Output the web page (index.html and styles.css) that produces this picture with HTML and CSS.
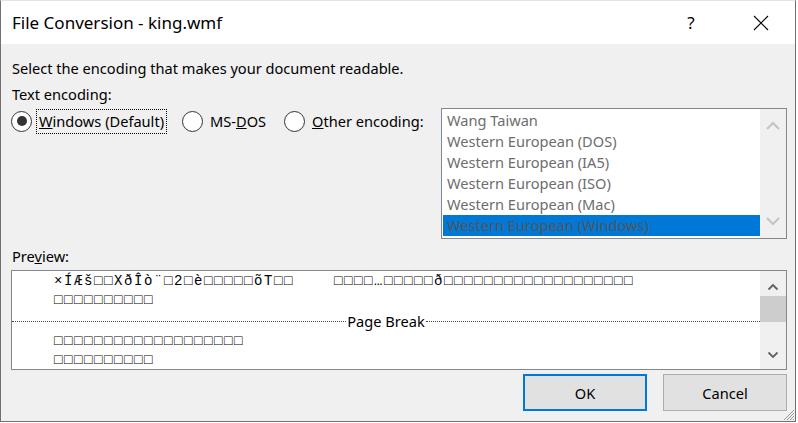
FILE: index.html
```html
<!DOCTYPE html>
<html lang="en">
<head>
  <meta charset="UTF-8">
  <title>File Conversion</title>
  <link rel="stylesheet" href="styles.css">
</head>
<body>

<div class="window">
  <!-- Title bar -->
  <div class="titlebar">
    <span class="title">File Conversion - king.wmf</span>
    <span class="help">?</span>
    <span class="close">
      <svg width="16" height="16" viewBox="0 0 16 16"><path d="M1 1 L15 15 M15 1 L1 15" stroke="#000" stroke-width="1.1" fill="none"/></svg>
    </span>
  </div>

  <div class="body">
    <p class="intro">Select the encoding that makes your document readable.</p>
    <p class="label">Text encoding:</p>

    <div class="enc-row">
      <div class="radios">
        <label class="radio checked"><span class="dot"></span><span class="text focus"><u>W</u>indows (Default)</span></label>
        <label class="radio"><span class="dot"></span><span class="text">MS-<u>D</u>OS</span></label>
        <label class="radio"><span class="dot"></span><span class="text"><u>O</u>ther encoding:</span></label>
      </div>

      <div class="listbox">
        <div class="list-items">
          <div class="item">Wang Taiwan</div>
          <div class="item">Western European (DOS)</div>
          <div class="item">Western European (IA5)</div>
          <div class="item">Western European (ISO)</div>
          <div class="item">Western European (Mac)</div>
          <div class="item selected">Western European (Windows)</div>
        </div>
        <div class="scrollbar disabled">
          <svg width="14" height="9" viewBox="0 0 14 9"><path d="M1 8 L7 2 L13 8" stroke="#c4c4c4" stroke-width="2.2" fill="none"/></svg>
          <svg width="14" height="9" viewBox="0 0 14 9"><path d="M1 1 L7 7 L13 1" stroke="#c4c4c4" stroke-width="2.2" fill="none"/></svg>
        </div>
      </div>
    </div>

    <p class="label preview-label">Pre<u>v</u>iew:</p>

    <div class="preview">
      <div class="preview-text">
        <div class="line">×ÍÆš□□XðÎò¨□2□è□□□□□õT□□    □□□□…□□□□□ð□□□□□□□□□□□□□□□□□□□</div>
        <div class="line">□□□□□□□□□□</div>
        <div class="page-break"><span class="dots"></span><span class="pb-text">Page Break</span><span class="dots"></span></div>
        <div class="line">□□□□□□□□□□□□□□□□□□□</div>
        <div class="line">□□□□□□□□□□</div>
      </div>
      <div class="scrollbar">
        <svg width="12" height="8" viewBox="0 0 12 8"><path d="M1.5 6.5 L6 2 L10.5 6.5" stroke="#606060" stroke-width="1.8" fill="none"/></svg>
        <div class="thumb"></div>
        <svg width="12" height="8" viewBox="0 0 12 8"><path d="M1.5 1.5 L6 6 L10.5 1.5" stroke="#606060" stroke-width="1.8" fill="none"/></svg>
      </div>
    </div>

    <div class="buttons">
      <button class="btn default">OK</button>
      <button class="btn">Cancel</button>
    </div>
  </div>

  <svg class="grip" width="12" height="12" viewBox="0 0 12 12">
    <path d="M11 1 L1 11 M11 4 L4 11 M11 7 L7 11 M11 10 L10 11" stroke="#9a9a9a" stroke-width="1" fill="none"/>
  </svg>
</div>

</body>
</html>
```

FILE: styles.css
```css
body {
  margin: 0;
  padding: 0;
  background: #ffffff;
  font-family: "Noto Sans", sans-serif;
  font-size: 14.6px;
  color: #000;
}
.window {
  position: relative;
  width: 794px;
  height: 420px;
  border: 1px solid #707070;
  border-top-color: #e4e4e4;
  background: #f0f0f0;
}
.titlebar {
  height: 43px;
  background: #fff;
  display: flex;
  align-items: center;
}
.title {
  font-size: 17px;
  margin-left: 11px;
  flex: 1;
  padding-bottom: 1px;
}
.help {
  font-size: 17px;
  width: 20px;
  text-align: center;
  margin-right: 52px;
}
.close {
  display: flex;
  width: 16px;
  margin-right: 26px;
}
.body {
  padding: 0 8px 0 10px;
}
.body p {
  margin: 0;
  line-height: 20px;
}
.intro {
  padding-top: 14px;
  padding-left: 1px;
}
.label {
  margin-top: 6px !important;
  padding-left: 1px;
}
.enc-row {
  display: flex;
  margin-top: 4px;
  height: 131px;
}
.radios {
  flex: 1;
  display: flex;
  gap: 15px;
  margin-top: 1px;
  height: 24px;
}
.radio {
  display: flex;
  align-items: center;
  gap: 4px;
}
.radio .dot {
  box-sizing: border-box;
  width: 21px;
  height: 21px;
  border: 1px solid #333;
  border-radius: 50%;
  background: #fff;
  display: flex;
  align-items: center;
  justify-content: center;
}
.radio.checked .dot::after {
  content: "";
  width: 10px;
  height: 10px;
  border-radius: 50%;
  background: #333;
}
.radio .text {
  padding: 1px 2px 2px;
  border: 1px solid transparent;
}
.radio .text.focus {
  border: 1px dotted #000;
}
.listbox {
  width: 344px;
  height: 129px;
  border: 1px solid #82878f;
  background: #fff;
  display: flex;
}
.list-items {
  flex: 1;
  padding: 1px 0 0 1px;
}
.item {
  height: 21px;
  line-height: 21px;
  padding-left: 4px;
  color: #6d6d6d;
}
.item.selected {
  background: #0078d7;
  color: #555;
}
.scrollbar {
  width: 26px;
  background: #f0f0f0;
  display: flex;
  flex-direction: column;
  align-items: center;
  justify-content: space-between;
}
.scrollbar.disabled {
  padding: 12px 0 12px;
}
.preview-label {
  margin-top: 7px !important;
}
.preview {
  margin-top: 4px;
  height: 98px;
  border: 1px solid #82878f;
  background: #fff;
  display: flex;
  overflow: hidden;
}
.preview-text {
  flex: 1;
  padding-top: 1px;
  overflow: hidden;
}
.line {
  font-family: "Liberation Mono", monospace;
  font-size: 14px;
  letter-spacing: 1.6px;
  line-height: 19px;
  height: 19px;
  padding-left: 42px;
  white-space: pre;
}
.page-break {
  display: flex;
  align-items: center;
  height: 22px;
}
.dots {
  flex: 1;
  border-bottom: 1px dotted #444;
  margin-top: 1px;
}
.pb-text {
  padding: 0 1px;
}
.preview .scrollbar {
  padding: 12px 0 10px;
}
.preview .scrollbar .thumb {
  width: 26px;
  height: 26px;
  background: #cdcdcd;
  margin-bottom: 24px;
}
.buttons {
  display: flex;
  justify-content: flex-end;
  gap: 16px;
  margin-top: 4px;
}
.btn {
  width: 124px;
  height: 37px;
  background: #e1e1e1;
  border: 1px solid #adadad;
  font-family: "Noto Sans", sans-serif;
  font-size: 14.6px;
  color: #000;
  padding: 0;
}
.btn.default {
  border: 2px solid #0078d7;
}
.grip {
  position: absolute;
  right: 0;
  bottom: 0;
}
```
